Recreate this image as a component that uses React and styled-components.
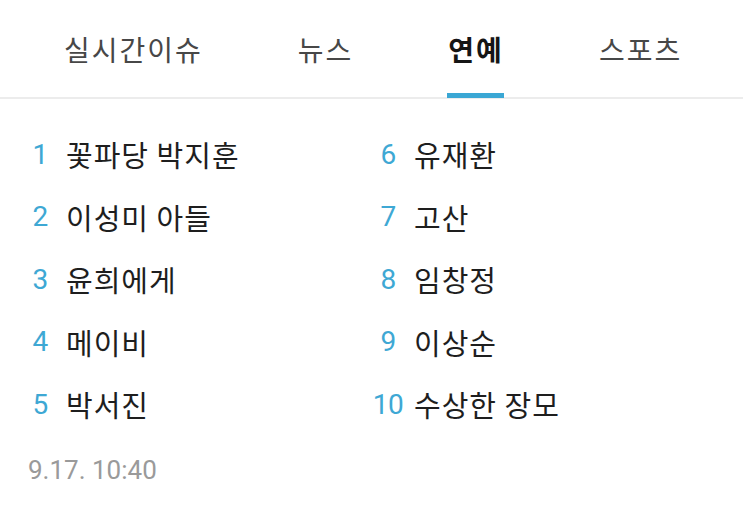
import React from "react";
import styled, { createGlobalStyle } from "styled-components";

const Global = createGlobalStyle`
  html, body { margin: 0; padding: 0; background: #ffffff; }
  body { font-family: "Noto Sans CJK KR", "Noto Sans", sans-serif; }
`;

const Page = styled.div`
  width: 743px;
  height: 512px;
  background: #ffffff;
  overflow: hidden;
`;

const TabBar = styled.nav`
  display: flex;
  align-items: stretch;
  gap: 95px;
  height: 97px;
  padding-left: 64px;
  border-bottom: 2px solid #ececec;
  box-sizing: content-box;
`;

const Tab = styled.div`
  position: relative;
  display: flex;
  align-items: center;
  padding-top: 1px;
  font-size: 28px;
  letter-spacing: 2px;
  line-height: 1;
  font-weight: ${(p) => (p.$active ? 600 : 400)};
  color: ${(p) => (p.$active ? "#151515" : "#474747")};
  white-space: nowrap;

  &::after {
    content: "";
    display: ${(p) => (p.$active ? "block" : "none")};
    position: absolute;
    left: -1px;
    right: 0;
    bottom: -1px;
    height: 5px;
    background: #3aa7d4;
  }
`;

const List = styled.ol`
  list-style: none;
  margin: 0;
  padding: 24px 0 0 20px;
  display: grid;
  grid-template-columns: 348px 348px;
  grid-template-rows: repeat(5, 62.5px);
  grid-auto-flow: column;
`;

const Item = styled.li`
  display: flex;
  align-items: center;
`;

const Rank = styled.span`
  width: 40px;
  text-align: center;
  font-family: Roboto, "Liberation Sans", sans-serif;
  font-size: 28px;
  color: #3ea8d4;
  letter-spacing: -0.5px;
`;

const Keyword = styled.span`
  margin-left: 6px;
  font-size: 29px;
  letter-spacing: 1px;
  color: #1e1e1e;
  white-space: nowrap;
`;

const Stamp = styled.div`
  margin: 19px 0 0 28px;
  font-family: Roboto, "Liberation Sans", sans-serif;
  font-size: 26px;
  line-height: 30px;
  color: #9a9a9a;
`;

const tabs = ["실시간이슈", "뉴스", "연예", "스포츠"];
const items = [
  "꽃파당 박지훈",
  "이성미 아들",
  "윤희에게",
  "메이비",
  "박서진",
  "유재환",
  "고산",
  "임창정",
  "이상순",
  "수상한 장모",
];

export default function App() {
  return (
    <Page>
      <Global />
      <TabBar>
        {tabs.map((t) => (
          <Tab key={t} $active={t === "연예"}>
            {t}
          </Tab>
        ))}
      </TabBar>
      <List>
        {items.map((k, i) => (
          <Item key={k}>
            <Rank>{i + 1}</Rank>
            <Keyword>{k}</Keyword>
          </Item>
        ))}
      </List>
      <Stamp>9.17. 10:40</Stamp>
    </Page>
  );
}
